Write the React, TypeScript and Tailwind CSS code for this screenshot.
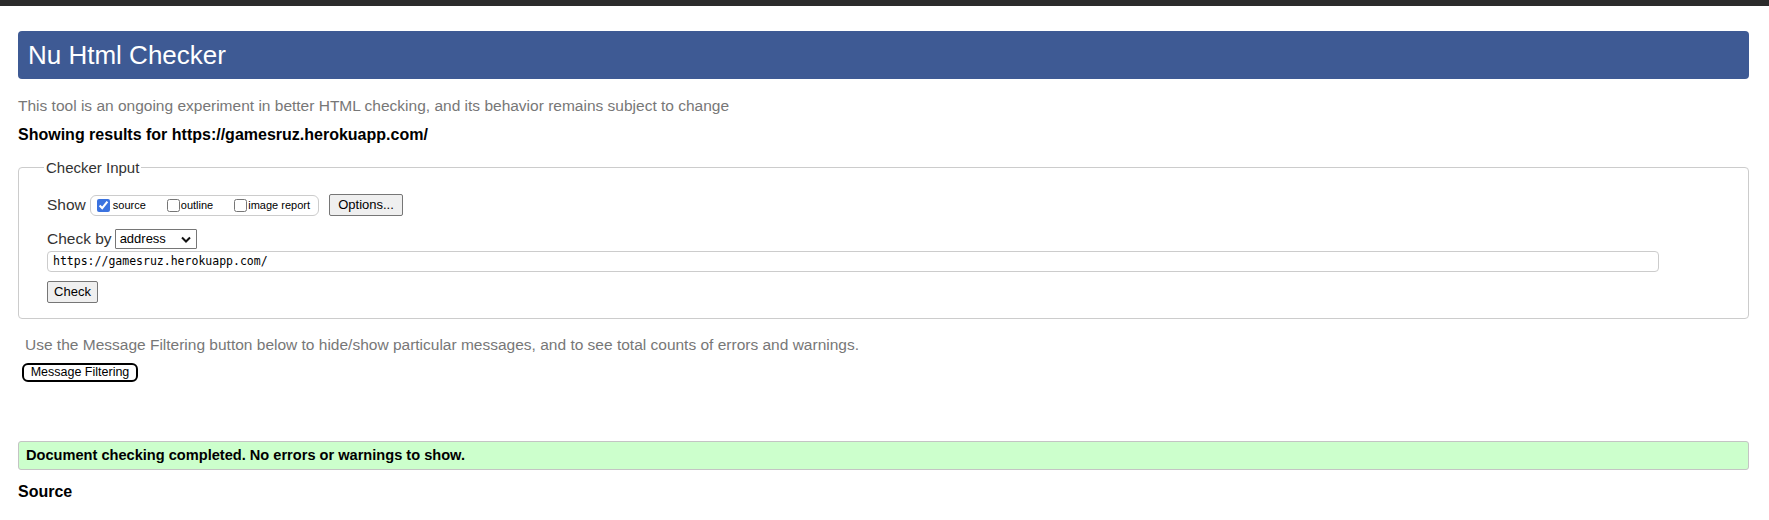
import React from "react";

function Checkbox({ checked }: { checked?: boolean }) {
  return (
    <input
      type="checkbox"
      defaultChecked={checked}
      className="m-0 h-[13px] w-[13px] accent-[#3b73e0]"
    />
  );
}

export default function App() {
  return (
    <div className="min-h-[520px] bg-white font-['Liberation_Sans',Arial,sans-serif] text-black">
      <div className="h-[6px] bg-[#2b2b2b]" />
      <div className="flex flex-col pl-[18px] pr-[20px]">
        <div className="mt-[25px] flex h-[48px] items-start rounded-[4px] bg-[#3e5a94] pl-[10px] pt-[11px] text-[26px] leading-none text-white">
          Nu Html Checker
        </div>
        <p className="mt-[18px] text-[15.5px] leading-[17px] text-[#777]">
          This tool is an ongoing experiment in better HTML checking, and its behavior remains subject to change
        </p>
        <p className="mt-[12px] text-[16px] font-bold leading-[18px]">
          Showing results for https://gamesruz.herokuapp.com/
        </p>
        <fieldset className="mt-[15px] rounded-[4px] border border-[#cccccc] pb-[15px] pl-[25px] pt-[18px]">
          <legend className="px-[2px] text-[15px] leading-[17px] text-[#333]">Checker Input</legend>
          <div className="flex flex-col items-start pl-[3px] text-[#333]">
            <div className="flex h-[22px] items-center">
              <span className="text-[15.5px]">Show</span>
              <div className="ml-[4px] flex h-[21px] items-center rounded-[6px] border border-[#cccccc] pl-[6px] pr-[8px] text-[11px] text-black">
                <Checkbox checked />
                <span className="ml-[3px]">source</span>
                <span className="ml-[21px] flex items-center">
                  <Checkbox />
                  <span className="ml-[1px]">outline</span>
                </span>
                <span className="ml-[21px] flex items-center">
                  <Checkbox />
                  <span className="ml-[1px]">image report</span>
                </span>
              </div>
              <button className="ml-[10px] block h-[22px] w-[74px] rounded-[2px] border border-[#767676] bg-[#efefef] text-[13px] text-black">
                Options...
              </button>
            </div>
            <div className="mt-[13px] flex h-[20px] items-center">
              <span className="text-[15.5px]">Check by</span>
              <div className="ml-[3px] flex h-[20px] w-[82px] items-center justify-between rounded-[1px] border border-[#767676] bg-white pl-[4px] pr-[5px] text-[13px] text-black">
                <span>address</span>
                <svg width="10" height="7" viewBox="0 0 10 7">
                  <path d="M1 1.5 L5 5.5 L9 1.5" fill="none" stroke="#111" strokeWidth="2" />
                </svg>
              </div>
            </div>
            <div className="mt-[2px] flex h-[21px] w-[1612px] items-center rounded-[4px] border border-[#cccccc] bg-white pl-[5px] font-['DejaVu_Sans_Mono',monospace] text-[11.5px] text-black">
              https://gamesruz.herokuapp.com/
            </div>
            <button className="mt-[9px] block h-[22px] w-[51px] rounded-[2px] border border-[#767676] bg-[#efefef] text-[13px] text-black">
              Check
            </button>
          </div>
        </fieldset>
        <p className="mt-[17px] pl-[7px] text-[15.5px] leading-[18px] text-[#777]">
          Use the Message Filtering button below to hide/show particular messages, and to see total counts of errors and warnings.
        </p>
        <div className="ml-[4px] mt-[9px] flex">
          <button className="block h-[19px] w-[116px] rounded-[6px] border-2 border-black bg-white text-[12.5px] leading-none text-black">
            Message Filtering
          </button>
        </div>
        <div className="mt-[59px] flex h-[29px] items-center rounded-[3px] border border-[#c4c4c4] bg-[#ccffcc] pl-[7px] text-[14.6px] font-bold">
          Document checking completed. No errors or warnings to show.
        </div>
        <p className="mt-[13px] text-[16px] font-bold leading-[18px]">Source</p>
      </div>
    </div>
  );
}
